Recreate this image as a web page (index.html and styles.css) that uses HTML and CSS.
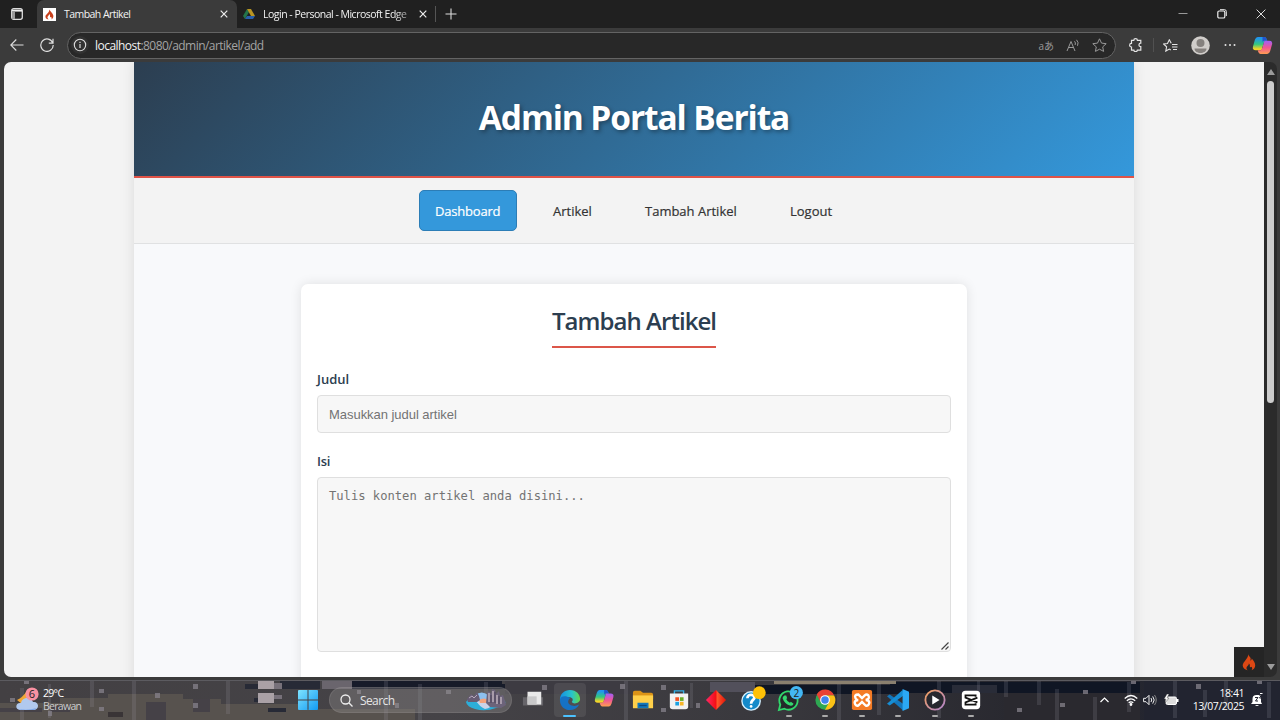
FILE: index.html
```html
<!DOCTYPE html>
<html lang="id">
<head>
<meta charset="utf-8">
<title>Tambah Artikel</title>
<link rel="stylesheet" href="styles.css">
</head>
<body>
<div class="screen">
  <div class="tabs">
    <svg class="workspace" width="12" height="12" viewBox="0 0 12 12"><rect x=".7" y=".7" width="10.6" height="10.6" rx="2" fill="none" stroke="#ddd" stroke-width="1.3"/><path d="M1 1.6h10v2H1z" fill="#eee"/><path d="M1 3h3v8H1z" fill="#999"/></svg>
    <div class="tab active">
      <svg width="13" height="13" viewBox="0 0 13 13"><rect width="13" height="13" fill="#fff"/><path d="M6.2 1.5C7 3 9.800 5 10.300 7.500c.3 2-.5 3.300-2 4 .6-1 .5-2-.3-2.600-.4.6-1.200.2-1-.6.3-1-.2-1.700-1-2.300.3 2-2 2-1.400 4 .2.700.6 1.100 1 1.500C3 11 2.100 9.500 2.500 8 3 6 6.500 5 6.200 1.500z" fill="#c8401c"/></svg>
      <span class="t1">Tambah Artikel</span>
      <svg class="x" width="8" height="8" viewBox="0 0 8 8"><path d="M.7.7l6.600 6.600M7.300.7L.7 7.300" stroke="#eee" stroke-width="1.200"/></svg>
    </div>
    <div class="tab second">
      <svg width="12" height="12" viewBox="0 0 12 12"><path d="M4 1L0 8l2 3 4-7z" fill="#23744a"/><path d="M4 1h4l4 7H8z" fill="#b99522"/><path d="M4 8h8l-2 3H2z" fill="#285eaa"/></svg>
      <span class="t2">Login - Personal - Microsoft Edge</span>
      <svg class="x" width="8" height="8" viewBox="0 0 8 8"><path d="M.7.7l6.600 6.600M7.300.7L.7 7.300" stroke="#eee" stroke-width="1.200"/></svg>
    </div>
    <i class="tabsep"></i>
    <svg class="plus" width="12" height="12" viewBox="0 0 12 12"><path d="M6 .5v11M.5 6h11" stroke="#ddd" stroke-width="1.100"/></svg>
    <div class="winbtns">
      <svg width="10" height="10" viewBox="0 0 10 10"><path d="M.5 4.500h9" stroke="#999"/></svg>
      <svg width="10" height="10" viewBox="0 0 10 10"><rect x=".8" y="2" width="7" height="7" rx="1.300" fill="none" stroke="#eee" stroke-width="1.200"/><path d="M3 .7h4.500q1.800 0 1.800 1.800v4.500" fill="none" stroke="#eee"/></svg>
      <svg width="10" height="10" viewBox="0 0 10 10"><path d="M.6.6l8.800 8.800M9.400.6L.6 9.400" stroke="#ddd"/></svg>
    </div>
  </div>
  <div class="toolbar">
    <svg class="back" width="14" height="12" viewBox="0 0 14 12" fill="none" stroke="#ddd" stroke-width="1.100"><path d="M13.500 6H.8M6.300.5L.8 6l5.500 5.500"/></svg>
    <svg class="reload" width="14" height="14" viewBox="0 0 14 14" fill="none" stroke="#ddd" stroke-width="1.200"><path d="M12.800 5A6.200 6.200 0 1 0 13.200 7M13 .8v4.400H8.800"/></svg>
    <div class="address">
      <svg class="info" width="18" height="18" viewBox="0 0 18 18"><circle cx="9" cy="9" r="9" fill="#323232"/><circle cx="9" cy="9" r="5.700" fill="none" stroke="#ddd" stroke-width="1.100"/><path d="M9 8v4M9 5.700v1.200" stroke="#ddd" stroke-width="1.200"/></svg>
      <span class="url"><b>localhost</b>:8080/admin/artikel/add</span>
      <span class="translate">aあ</span>
      <svg class="read" width="14" height="13" viewBox="0 0 14 13" fill="none" stroke="#999" stroke-width="1"><path d="M1 12L5 2.500 9 12M2.500 8.500h5M8.500 2.300q1.600 1.500.6 3.700M10.500.8q2.600 2.500 1 6"/></svg>
      <svg class="fav" width="15" height="14" viewBox="0 0 15 14"><path d="M7.500.8l2 4.300 4.700.6-3.500 3.200.9 4.500-4.100-2.200-4.100 2.200.9-4.500L.8 5.700l4.700-.6z" fill="none" stroke="#999"/></svg>
    </div>
    <svg class="ext" width="14" height="14" viewBox="0 0 14 14"><path d="M2.500 2.300h2.300c0-2.200 3.600-2.200 3.600 0h3.400v2.900c-2.400-.2-2.400 3.700 0 3.500v3.400H8.400c0 2-3.600 2-3.600 0H2.500V9C0 9 0 5.400 2.500 5.400z" fill="none" stroke="#e4e4e4" stroke-width="1.200"/></svg>
    <i class="toolsep"></i>
    <svg class="list" width="15" height="13" viewBox="0 0 15 13" fill="none" stroke="#e4e4e4" stroke-width="1.100"><path d="M8.200 4.300L6.300.8 4.500 4.500.6 5l3 2.800-.8 4.300 3.500-2 1.500.9M9 5.500h5.500M9 8h5.500M10 10.500h4"/></svg>
    <svg class="avatar" width="19" height="19" viewBox="0 0 19 19"><circle cx="9.500" cy="9.500" r="9.300" fill="#d0cdca"/><circle cx="9.500" cy="7" r="4" fill="#85817e"/><path d="M3.500 12.500h12c0 6-12 6-12 0z" fill="#85817e"/></svg>
    <svg class="dots" width="12" height="4" viewBox="0 0 12 4" fill="#e4e4e4"><circle cx="1.500" cy="2" r="1"/><circle cx="6" cy="2" r="1"/><circle cx="10.500" cy="2" r="1"/></svg>
    <svg class="copilot" width="19" height="19" viewBox="0 0 20 20"><use href="#cp"/></svg>
  </div>
  <div class="browser">
    <div class="page">
      <div class="container">
        <header><h1>Admin Portal Berita</h1></header>
        <nav><a class="on"><span class="n1">Dashboard</span></a><a><span class="n2">Artikel</span></a><a><span class="n3">Tambah Artikel</span></a><a><span class="n4">Logout</span></a></nav>
        <main>
          <div class="card">
            <h2>Tambah Artikel</h2>
            <label>Judul</label>
            <div class="input">Masukkan judul artikel</div>
            <label class="l2">Isi</label>
            <div class="textarea">Tulis konten artikel anda disini...<svg class="grip" width="8" height="8" viewBox="0 0 8 8"><path d="M.5 7.500l7-7M4.500 7.500l3-3" stroke="#444" stroke-width="1.200"/></svg></div>
          </div>
        </main>
      </div>
      <div class="debug"><svg width="14" height="18" viewBox="0 0 14 18"><path d="M6.300.5C6 2 7.300 3 8.300 4.500c.6 1 .4 2-.1 2.900 1 .1 1.500-.5 1.400-1.900 2 2 3.700 4.300 3.600 7 0 2.300-1.600 4-3.700 4.700 1.200-1.400.8-2.900-.3-3.500-.4 1-1.600.6-1.400-.6.200-1.200.1-2-1.100-2.700.5 2-2.200 2.700-2.200 4.600 0 .9.500 1.700 1.200 2.200C2.500 16.600.8 14.900.7 12.600.6 8.900 6.800 5.500 6.300.5z" fill="#dd4814"/></svg></div>
    </div>
    <div class="scroll">
      <svg width="8" height="6" viewBox="0 0 8 6"><path d="M4 0l4 6H0z" fill="#9b9b9b"/></svg>
      <i class="thumb"></i>
      <svg class="down" width="8" height="6" viewBox="0 0 8 6"><path d="M0 0h8L4 6z" fill="#9b9b9b"/></svg>
    </div>
  </div>
  <div class="taskbar">
    <svg class="wall" width="1280" height="40" viewBox="0 0 1280 40" shape-rendering="crispEdges">
      <defs><linearGradient id="wb"><stop offset="0" stop-color="#434043"/><stop offset=".35" stop-color="#454347"/><stop offset=".6" stop-color="#39383d"/><stop offset=".8" stop-color="#28282f"/><stop offset="1" stop-color="#202330"/></linearGradient></defs>
      <rect width="1280" height="40" fill="url(#wb)"/>
      <path d="M0 23h60v-5h70v5h16v-4h75v5h84v5h110v11H0zM108 14h75v10h-75z" fill="#57524e"/>
      <path d="M50 26h20v6H50zM0 28h42v4H0zM146 22h20v18h-20zM193 19h17v13h-17z" fill="#454147"/>
      <path d="M108 32h15v5h-15z" fill="#393436"/>
      <path d="M245 4h20v5h-20zM254 18h10v4h-10zM268 28h18v4h-18zM280 1h40v8h-40z" fill="#272a36"/>
      <path d="M258 1h16v8h-16zM258 13h16v10h-16z" fill="#aaa1a6"/><path d="M274 3h8v6h-8zM274 15h8v4h-8z" fill="#77717a"/>
      <path d="M322 0h30v9h-30z" fill="#6a656d"/>
      <path d="M352 1h150v3h14v5H352z" fill="#171b29"/>
      <path d="M505 1h125v13H505z" fill="#3d3b42"/>
      <path d="M710 2h45v10h-45z" fill="#52505b"/><path d="M755 5h145v9H755zM890 2h250v11H890z" fill="#101624"/><path d="M952 5h45v8h-45z" fill="#292c38"/>
      <path d="M774 0h122v4H774z" fill="#8a806f"/>
      <path d="M1144 1h136v39h-136z" fill="#222430"/><path d="M1004 13h136v27h-136z" fill="#2a292f"/>
      <g fill="#aaa9b2" opacity=".16"><path d="M20 8h4v32h-4zM48 4h3v34h-3zM90 0h4v27h-4zM132 0h4v40h-4zM226 0h4v34h-4zM384 0h4v40h-4zM418 4h4v36h-4zM484 2h4v26h-4zM624 0h4v40h-4zM690 3h3v25h-3zM837 4h4v36h-4zM877 3h4v32h-4zM937 0h4v38h-4zM977 0h3v20h-3zM1004 0h4v17h-4zM1037 0h4v25h-4zM1055 9h4v31h-4zM1093 17h4v23h-4zM1127 2h4v30h-4zM1173 0h4v38h-4zM1203 10h4v27h-4zM1224 0h4v28h-4zM1267 2h4v36h-4z"/></g>
      <g fill="#85828b"><path d="M24 0h5v4h-5zM99 9h5v4h-5zM155 13h5v5h-5zM193 4h5v5h-5zM193 23h5v5h-5zM99 27h5v4h-5zM48 31h4v5h-4zM10 18h5v4h-5zM357 10h4v4h-4zM395 23h4v5h-4zM446 10h5v4h-5zM542 5h5v5h-5zM620 4h5v5h-5zM661 5h5v5h-5zM696 23h4v5h-4zM661 28h5v4h-5zM1083 10h5v4h-5zM1131 0h5v4h-5zM1017 28h5v4h-5zM1060 23h5v4h-5zM1196 4h5v5h-5zM1257 0h5v4h-5z" opacity=".75"/></g>
      <path d="M0 .5h1280" stroke="#5c5b60"/>
    </svg>
    <div class="tasks">
      <div class="weather"><svg width="24" height="27" viewBox="0 0 24 27"><path d="M10 5q-3 5-9 8l5 4 6-3z" fill="#f3a834"/><path d="M4 23c-6-1-4-8 1-7 1-6 10-7 12-1 6-1 7 7 1 8z" fill="#b1c9ee"/><path d="M3 22c4 1 12 1 17-1-1 2-2 2-4 2H5z" fill="#7ba4e5"/><circle cx="16" cy="7" r="6.600" fill="#f991a2"/><text x="16" y="11" class="badge">6</text></svg><div><span class="temp">29°C</span><span class="sky">Berawan</span></div></div>
      <svg class="start" width="20" height="20" viewBox="0 0 20 20"><defs><linearGradient id="ws" x2="1" y2="1"><stop stop-color="#7ee3ff"/><stop offset="1" stop-color="#129af2"/></linearGradient></defs><path d="M0 1q0-1 1-1h8.500v9.500H0zM10.500 0H19q1 0 1 1v8.500h-9.500zM0 10.500h9.500V20H1q-1 0-1-1zM10.500 10.500H20V19q0 1-1 1h-8.500z" fill="url(#ws)"/></svg>
      <div class="search"><svg width="13" height="13" viewBox="0 0 13 13"><circle cx="5.500" cy="5.500" r="4.500" fill="none" stroke="#eee" stroke-width="1.300"/><path d="M8.800 8.800l3.700 3.700" stroke="#eee" stroke-width="1.300"/></svg><span>Search</span>
      <svg class="city" width="42" height="22" viewBox="0 0 42 22"><path d="M1 13q3-5 10-5l10-2 18 5q5 5-8 8-11 4-21 1Q2 18 1 13z" fill="#2caed9"/><path d="M10 6q7-5 13 0v8H12z" fill="#8dc0ef"/><path d="M12 13q8-4 16 0-1 6-8 7-5-2-8-7z" fill="#c9d3e8"/><path d="M14 11q5-3 9 0l-1 3h-7z" fill="#f3a27b"/><path d="M2 10l4-5 3 2 3-4 2 4 1 4-3 2H3z" fill="#675c74"/><path d="M4 9l3-2 2 2 3-3" stroke="#b5a9ba" fill="none"/><path d="M21 14l1-10 2-2 2 3 1-5 3 1 1 4 3-3 1 5 3-1 2 6 1 4-5 3-11-1z" fill="#6c637a"/><path d="M24 4v9M28 2v11M32 6v9M36 8v7" stroke="#cfc1cb" stroke-width="1.200"/><path d="M26 6v8M30 3v11M34 7v8" stroke="#4b4359"/></svg></div>
      <div class="apps">
        <span><svg viewBox="0 0 24 24"><path d="M1 9h22v9H1z" fill="#666469"/><path d="M6 3h15v14H6z" fill="#e9e9e9"/><path d="M6 8h10v9H6z" fill="#c8c8c9"/></svg></span>
        <span class="focus"><svg viewBox="0 0 24 24"><defs><linearGradient id="ed" x2="1"><stop stop-color="#1390e5"/><stop offset=".6" stop-color="#29c4c9"/><stop offset="1" stop-color="#65d849"/></linearGradient></defs><path d="M1 12C1 5 6 1 12 1c7 0 11 5 11 10 0 5-8 6-9 3 2-2 1-5-3-5-5 0-9 3-10 3z" fill="url(#ed)"/><path d="M1 12c0 7 5 11 11 11 4 0 8-2 10-6-5 3-12 1-12-3 0-2 1-3 2-4-5-4-11-2-11 2z" fill="#1672c4"/></svg></span>
        <span><svg viewBox="0 0 24 24"><defs><linearGradient id="ca" x2="0" y2="1"><stop offset=".1" stop-color="#2196ee"/><stop offset=".55" stop-color="#35c77e"/><stop offset=".9" stop-color="#f5d428"/></linearGradient><linearGradient id="cb" x2="0" y2="1"><stop offset=".05" stop-color="#a85eed"/><stop offset=".5" stop-color="#f05597"/><stop offset="1" stop-color="#ff9d50"/></linearGradient></defs><g id="cp"><path d="M5 1h7q2 0 3 4h-3L9 15H3q-4 0-3-4l2-7q1-3 3-3z" fill="url(#ca)"/><path d="M10 1h2q2 0 3 4h-3q-2 0-2 2z" fill="#2354cc"/><path d="M12 5h5q4 0 3 4l-2 7q-1 3-3 3H8q-2 0-3-4h3q1 0 2-3z" fill="url(#cb)"/></g></svg></span>
        <span><svg viewBox="0 0 24 24"><path d="M1 4q0-2 2-2h6l3 2h9q2 0 2 2v5H1z" fill="#dc9417"/><path d="M1 7h22v14H1z" fill="#ffd04a"/><path d="M6 15h12v6H6z" fill="#1477ba"/><path d="M8 18h8" stroke="#0b4a84" stroke-width="1.500"/></svg></span>
        <span><svg viewBox="0 0 24 24"><path d="M7 6V2h10v4" fill="none" stroke="#32afe6" stroke-width="1.500"/><path d="M2 5h20v14q0 3-3 3H5q-3 0-3-3z" fill="#f1f1f1"/><path d="M8 9h4v4H8z" fill="#f25022"/><path d="M13 9h4v4h-4z" fill="#69ad26"/><path d="M8 14h4v4H8z" fill="#1ba1e2"/><path d="M13 14h4v4h-4z" fill="#f8b526"/></svg></span>
        <span><svg viewBox="0 0 24 24"><defs><linearGradient id="rd"><stop stop-color="#ff2867"/><stop offset=".5" stop-color="#f20f14"/><stop offset=".55" stop-color="#ff5a2d"/><stop offset="1" stop-color="#df1308"/></linearGradient></defs><path d="M12 1l11 11-11 11L1 12z" fill="url(#rd)"/></svg></span>
        <span><svg viewBox="0 0 24 24"><circle cx="11" cy="13" r="10" fill="#148aca" stroke="#d4f0ff" stroke-width="1.500"/><path d="M7 10c0-6 10-4 7 1-2 2-3 2-3 5" fill="none" stroke="#fff" stroke-width="3"/><circle cx="11" cy="19" r="1.500" fill="#fff"/><circle cx="20" cy="4" r="7" fill="#ffc107"/></svg></span>
        <span class="run"><svg viewBox="0 0 24 24"><path d="M1 23l1.500-6A10 10 0 1 1 7 21.500z" fill="#24282a" stroke="#31d66b" stroke-width="2"/><path d="M7 7l2 0 1 3-1 1q1 3 4 4l1-1 3 2q-1 3-4 2-6-2-8-8 0-2 2-3z" fill="#35d96f"/><circle cx="20" cy="4" r="7.200" fill="#43b7f4"/><text x="20" y="8.500" class="badge">2</text></svg></span>
        <span class="run"><svg viewBox="0 0 24 24"><circle cx="12" cy="12" r="10.500" fill="#2ea852"/><path d="M3 6A10.500 10.500 0 0 1 22 7H12L7 14z" fill="#e84234"/><path d="M12 7h10a10.500 10.500 0 0 1-10 15.500l4.500-8z" fill="#fbc116"/><circle cx="12" cy="12" r="5.300" fill="#fff"/><circle cx="12" cy="12" r="4.100" fill="#3f83ed"/></svg></span>
        <span class="run"><svg viewBox="0 0 24 24"><rect x="1" y="1" width="22" height="22" rx="2" fill="#f47b25"/><path d="M8 6q-5 0-3 4 1 2 3 2-4 0-4 3 1 4 4 3l4-4 4 4q3 1 4-3 0-3-4-3 5-1 3-5-2-2-4 0l-3 3-3-3z" fill="none" stroke="#fff" stroke-width="2.600"/></svg></span>
        <span class="run"><svg viewBox="0 0 24 24"><path d="M0 8l3-2 20 14-6 3z" fill="#1377bd"/><path d="M0 16l3 2L18 7l-1-6z" fill="#168dd4"/><path d="M17 0l7 3v18l-7 3z" fill="#2ba8f4"/></svg></span>
        <span class="run"><svg viewBox="0 0 24 24"><defs><linearGradient id="mp" x2="1" y2="1"><stop stop-color="#f2a05e"/><stop offset="1" stop-color="#af84cd"/></linearGradient></defs><circle cx="12" cy="12" r="10.500" fill="#27282e" stroke="url(#mp)" stroke-width="2"/><path d="M9 7l8 5-8 5z" fill="#fff"/></svg></span>
        <span class="run"><svg viewBox="0 0 24 24"><rect x="2" y="2" width="20" height="20" rx="4" fill="#fff"/><path d="M17 8.500V7H6v2.500l13 5M17 15.500V17H6v-2.500l13-5" fill="none" stroke="#111" stroke-width="2"/></svg></span>
      </div>
      <div class="tray">
        <svg class="chev" width="9" height="6" viewBox="0 0 9 6"><path d="M.5 5l4-4 4 4" fill="none" stroke="#fff" stroke-width="1.200"/></svg>
        <svg class="wifi" width="14" height="12" viewBox="0 0 14 12" fill="none" stroke="#fff" stroke-width="1.200"><path d="M.7 4.500q6.300-6 12.600 0M2.800 6.800q4.200-4 8.400 0M4.700 8.800q2.300-2 4.600 0"/><circle cx="7" cy="10.500" r=".8" fill="#fff"/></svg>
        <svg class="vol" width="14" height="12" viewBox="0 0 14 12" fill="none" stroke="#eee"><path d="M.6 4.300H3l3-3v9.400l-3-3H.6zM8 4q1.500 2 0 4M9.700 2.400q3 3.600 0 7.200"/><path d="M11.500 1q3.500 5 0 10" stroke="#888"/></svg>
        <svg class="batt" width="15" height="12" viewBox="0 0 15 12"><rect x="2" y="3" width="10.500" height="7.500" rx="1.500" fill="#ddd" stroke="#fff"/><path d="M13 5h1.500v3H13z" fill="#fff"/><path d="M3 0L0 5h2L1 9l4-5H3l2-4z" fill="#fff" stroke="#333" stroke-width=".4"/></svg>
        <div class="clock"><span class="time">18:41</span><span class="date">13/07/2025</span></div>
        <svg class="bell" width="12" height="14" viewBox="0 0 12 14"><path d="M1.500 9V6q0-4 4-4H10v7l1 2H0zM4 12h4q-2 2-4 0z" fill="#fff"/><path d="M4 4.500h3L4.500 8H7M8 2h2.500L8.500 5H11" fill="none" stroke="#222430"/><path d="M9 .5h2.500" stroke="#fff"/></svg>
      </div>
    </div>
  </div>
</div>
</body>
</html>
```
FILE: styles.css
```css
* { box-sizing: border-box; }
body { margin: 0; font-family: "Open Sans", "Noto Sans", "Noto Sans CJK JP", sans-serif; }
svg { display: block; flex: none; }
span { white-space: nowrap; }
.screen { width: 1280px; height: 720px; overflow: hidden; display: flex; flex-direction: column; background: #3b3b3b; }

.tabs { height: 28px; flex: none; background: #202020; display: flex; align-items: center; color: #f2f2f2; font-size: 10.5px; }
.workspace { margin: 0 0 0 11px; }
.tab { height: 28px; display: flex; align-items: center; }
.active { width: 200px; margin-left: 14px; padding: 0 9px 0 6px; background: #3b3b3b; border-radius: 7px 7px 0 0; }
.active span { margin-left: 8px; letter-spacing: -.55px; }
.x { margin-left: auto; }
.second { width: 184px; margin-left: 6px; }
.second span { width: 151px; margin-left: 8px; font-size: 10.500px; letter-spacing: -.5px; -webkit-mask-image: linear-gradient(90deg, #000 86%, #0006 98%); mask-image: linear-gradient(90deg, #000 86%, #0006 98%); }
.second .x { margin-right: 0; }
.tabsep { width: 1px; height: 16px; margin-left: 8px; background: #555; }
.plus { margin-left: 9px; }
.winbtns { margin-left: auto; margin-right: 14px; display: flex; gap: 29px; }

.toolbar { height: 34px; flex: none; background: #3b3b3b; display: flex; align-items: center; }
.back { margin-left: 10px; }
.reload { margin-left: 16px; }
.address { width: 1049px; height: 27px; margin-left: 13px; display: flex; align-items: center; border: 1px solid #646464; border-radius: 14px; background: #282828; color: #a4a4a4; padding: 0 8px 0 3px; }
.url { margin-left: 6px; font-size: 12px; letter-spacing: -.54px; }
.url b { font-weight: 400; color: #f2f2f2; }
.translate { margin-left: auto; font-size: 10px; color: #999; }
.read { margin-left: 12px; }
.fav { margin-left: 12px; }
.ext { margin-left: 13px; }
.toolsep { width: 1px; height: 14px; margin-left: 10px; background: #515151; }
.list { margin-left: 9px; }
.avatar { margin-left: 13px; }
.dots { margin-left: 14px; }
.copilot { margin-left: 17px; overflow: visible; }

.browser { height: 618px; flex: none; display: flex; padding: 0 3px 3px 4px; }
.page { position: relative; width: 1260px; height: 615px; overflow: hidden; background: #f3f3f3; border-radius: 7px 0 0 7px; }
.container { width: 1000px; height: 700px; margin-left: 130px; background: #f8f9fb; box-shadow: 0 0 12px rgba(0, 0, 0, .1); }
header { height: 116px; padding-top: 31px; text-align: center; color: #fff; border-bottom: 2.500px solid #e05347; background: linear-gradient(135deg, #2c3e50, #3498db); }
h1 { margin: 0; font-size: 33.500px; line-height: 48px; font-weight: 700; letter-spacing: -1.1px; text-shadow: 2px 2px 4px rgba(0, 0, 0, .35); }
nav { height: 66px; display: flex; align-items: center; justify-content: center; gap: 20px; border-bottom: 1px solid #e0e1e2; background: #f3f3f3; }
nav a { height: 41px; padding: 0 15px; display: flex; align-items: center; color: #333; font-size: 13px; font-weight: 500; border: 1px solid transparent; border-radius: 5px; -webkit-text-stroke: .2px; }
nav .on { color: #fff; background: #3498db; border-color: #2c7db6; }
.n1 { width: 66px; letter-spacing: -.2px; }
.n2 { width: 40px; }
.n3 { width: 93px; }
.n4 { width: 43px; }
main { padding: 40px 167px 0; }
.card { height: 450px; padding: 20px 16px 0; display: flex; flex-direction: column; border-radius: 7px; background: #fff; box-shadow: 0 0 12px rgba(0, 0, 0, .1); }
h2 { align-self: center; width: 164px; height: 44px; margin: 0 0 21px; border-bottom: 2px solid #dc5649; color: #2c3e50; font-size: 24px; line-height: 34px; font-weight: 600; letter-spacing: -.95px; white-space: nowrap; }
label { height: 20px; margin-bottom: 6px; color: #2c3e50; font-size: 13px; line-height: 20px; font-weight: 600; }
.l2 { letter-spacing: -.3px; }
label, .textarea, .input, h1 { white-space: nowrap; }
.input { height: 38px; margin-bottom: 18px; padding: 0 11px; border: 1px solid #dfdfdf; border-radius: 4px; background: #f7f7f7; color: #737373; font: 13px/37px "Liberation Sans", sans-serif; letter-spacing: -.04px; }
.textarea { position: relative; height: 175px; padding: 10px 11px; border: 1px solid #dfdfdf; border-radius: 4px; background: #f7f7f7; color: #737373; font: 12.150px/16px "DejaVu Sans Mono", monospace; }
.grip { position: absolute; right: 1px; bottom: 1px; }
.debug { position: absolute; right: 0; bottom: 0; width: 30px; height: 30px; display: flex; align-items: center; justify-content: center; background: #252525; }
.scroll { width: 13px; height: 615px; display: flex; flex-direction: column; align-items: center; padding: 7px 0; background: #2b2b2b; border-radius: 0 7px 7px 0; }
.thumb { width: 7px; height: 322px; margin-top: 6px; border-radius: 4px; background: #cdcdcd; }
.down { margin-top: auto; }

.taskbar { position: relative; height: 40px; flex: none; }
.wall { position: absolute; left: 0; top: 0; }
.tasks { position: relative; height: 40px; display: flex; align-items: center; color: #fff; font-size: 10.5px; }
.weather { width: 298px; padding-left: 16px; display: flex; align-items: center; gap: 3px; }
.weather div, .clock { display: flex; flex-direction: column; align-items: flex-start; line-height: 13px; }
.temp { letter-spacing: -.7px; }
.weather .sky { color: #ccc; letter-spacing: -.7px; }
.badge { font-size: 11px; text-anchor: middle; fill: #222; }
.search { width: 183px; height: 26px; margin-left: 11px; padding: 0 4px 0 10px; border-radius: 13px; display: flex; align-items: center; background: rgba(150, 145, 145, .35); border: 1px solid rgba(170, 165, 165, .2); font-size: 12px; }
.search span { margin-left: 7px; letter-spacing: -.6px; color: #e5e5e5; }
.city { margin-left: auto; }
.apps { display: flex; margin-left: 3px; }
.apps span { position: relative; width: 36.500px; height: 36px; display: flex; align-items: center; justify-content: center; }
.apps svg { width: 22px; height: 22px; overflow: visible; }
.apps .focus::before { content: ""; position: absolute; inset: 1px 2px; border-radius: 4px; background: rgba(255, 255, 255, .08); }
.apps .focus svg { position: relative; }
.run::after, .focus::after { content: ""; position: absolute; bottom: 1px; width: 6px; height: 2px; border-radius: 1px; background: #aaa; }
.focus::after { width: 13px; background: #4cc2ff; }
.tray { margin-left: auto; margin-right: 17px; display: flex; align-items: center; color: #fff; }
.wifi { margin-left: 15px; }
.vol { margin-left: 5px; }
.batt { margin-left: 7px; }
.clock { width: 52px; margin-left: 13px; align-items: flex-end; letter-spacing: -.45px; }
.bell { margin-left: 7px; }
```
